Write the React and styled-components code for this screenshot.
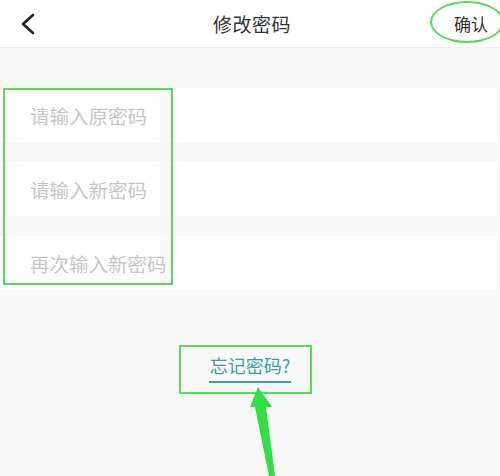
import React from 'react';
import styled, { createGlobalStyle } from 'styled-components';

const Global = createGlobalStyle`
  html, body { margin: 0; padding: 0; }
  body {
    background: #f8f8f8;
    font-family: "Noto Sans CJK SC", "Noto Sans", sans-serif;
  }
`;

const Page = styled.div`
  position: relative;
  width: 500px;
  height: 476px;
  overflow: hidden;
  background: #f8f8f8;
`;

const Header = styled.div`
  height: 48px;
  background: #fff;
  display: flex;
  align-items: center;
  justify-content: space-between;
  padding: 0 10px 0 20px;
  border-bottom: 1px solid #f0f0f0;
  box-sizing: border-box;
`;

const Back = styled.div`
  width: 20px;
  display: flex;
  align-items: center;
`;

const Title = styled.div`
  font-size: 19px;
  color: #333;
  letter-spacing: 0.5px;
  margin-left: 10px;
`;

const Confirm = styled.div`
  font-size: 17px;
  color: #333;
  padding-right: 2px;
`;

const Form = styled.div`
  display: flex;
  flex-direction: column;
  gap: 20px;
  margin-top: 40px;
`;

const Row = styled.div`
  height: 54px;
  background: #fff;
  display: flex;
  align-items: center;
  padding-left: 30px;
  margin-right: 3px;
  font-size: 19.5px;
  color: #c6c6c6;
`;

const Forgot = styled.div`
  display: flex;
  justify-content: center;
  margin-top: 62px;
`;

const ForgotLink = styled.span`
  font-size: 18px;
  color: #3a9ea3;
  border-bottom: 2px solid #3a9ea3;
  padding: 0 1px 3px;
`;

const Mark = styled.div`
  position: absolute;
  left: ${p => p.x}px;
  top: ${p => p.y}px;
  width: ${p => p.w}px;
  height: ${p => p.h}px;
  border: 2px solid #5ad85a;
  box-sizing: border-box;
  border-radius: ${p => (p.round ? '50%' : '0')};
  pointer-events: none;
`;

const Arrow = styled.svg`
  position: absolute;
  left: 240px;
  top: 380px;
`;

export default function App() {
  return (
    <Page>
      <Global />
      <Header>
        <Back>
          <svg width="16" height="22" viewBox="0 0 16 22">
            <path d="M13 2 L3 11 L13 20" fill="none" stroke="#222" strokeWidth="2.6" strokeLinecap="round" strokeLinejoin="round" />
          </svg>
        </Back>
        <Title>修改密码</Title>
        <Confirm>确认</Confirm>
      </Header>
      <Form>
        <Row>请输入原密码</Row>
        <Row>请输入新密码</Row>
        <Row>再次输入新密码</Row>
      </Form>
      <Forgot>
        <ForgotLink>忘记密码?</ForgotLink>
      </Forgot>

      <Mark x={430} y={1} w={74} h={42} round />
      <Mark x={3} y={88} w={170} h={197} />
      <Mark x={179} y={345} w={133} h={49} />
      <Arrow width="50" height="96" viewBox="0 0 50 96">
        <polygon points="18,7 32,27 26,27 35,96 29,96 15,27 10,27" fill="#33dd44" />
      </Arrow>
    </Page>
  );
}
